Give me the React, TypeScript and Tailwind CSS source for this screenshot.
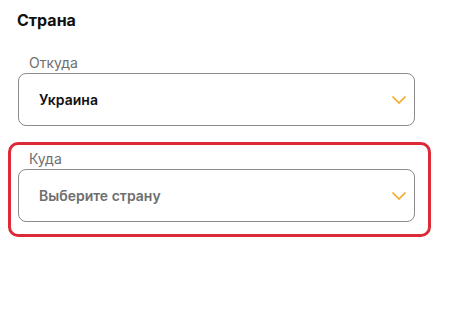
import { ChevronDown } from "lucide-react";

type FieldProps = {
  label: string;
  value?: string;
  placeholder?: string;
};

function SelectField({ label, value, placeholder }: FieldProps) {
  return (
    <div className="flex flex-col">
      <span className="pl-[11px] text-[14px] leading-[20px] text-[#6e6e6e]">{label}</span>
      <div className="flex h-[53px] w-[397px] items-center justify-between rounded-[8px] border border-[#8c8c8c] pl-[20px] pr-[3px]">
        <span
          className={`text-[14px] font-semibold ${value ? "text-[#111]" : "text-[#6e6e6e]"}`}
        >
          {value ?? placeholder}
        </span>
        <ChevronDown className="h-[24px] w-[24px] text-[#f5a623]" strokeWidth={1.7} />
      </div>
    </div>
  );
}

export default function App() {
  return (
    <div
      className="h-[309px] w-[453px] bg-white"
      style={{ fontFamily: "Inter, 'Noto Sans', sans-serif" }}
    >
      <h2 className="pl-[17px] pt-[10px] text-[16px] font-bold leading-[20px] text-[#111]">
        Страна
      </h2>
      <div className="ml-[18px] mt-[23px]">
        <SelectField label="Откуда" value="Украина" />
      </div>
      <div className="ml-[8px] mt-[16px] w-[423px] rounded-[10px] border-[3px] border-[#dc2a38] pb-[12px] pl-[7px] pt-[4px]">
        <SelectField label="Куда" placeholder="Выберите страну" />
      </div>
    </div>
  );
}
